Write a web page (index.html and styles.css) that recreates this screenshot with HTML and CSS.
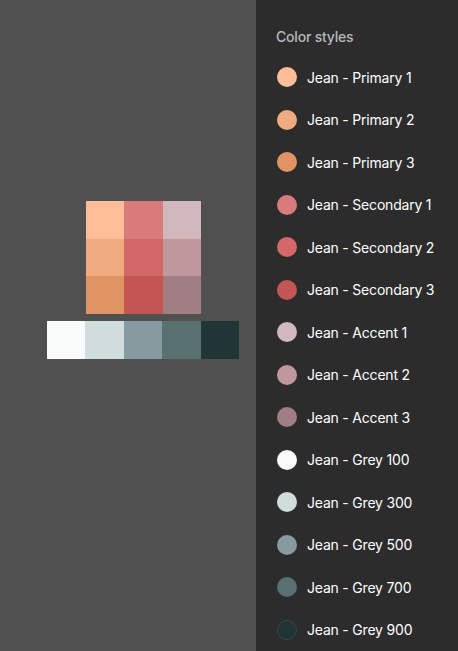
FILE: index.html
```html
<!DOCTYPE html>
<html>
<head>
  <title>Jean palette</title>
  <link rel="stylesheet" href="styles.css">
</head>
<body>
  <div class="app">
    <div class="canvas">
      <div class="palette">
        <div class="grid">
          <div class="cell c-primary-1"></div>
          <div class="cell c-secondary-1"></div>
          <div class="cell c-accent-1"></div>
          <div class="cell c-primary-2"></div>
          <div class="cell c-secondary-2"></div>
          <div class="cell c-accent-2"></div>
          <div class="cell c-primary-3"></div>
          <div class="cell c-secondary-3"></div>
          <div class="cell c-accent-3"></div>
        </div>
        <div class="greys">
          <div class="cell c-grey-100"></div>
          <div class="cell c-grey-300"></div>
          <div class="cell c-grey-500"></div>
          <div class="cell c-grey-700"></div>
          <div class="cell c-grey-900"></div>
        </div>
      </div>
    </div>

    <div class="sidebar">
      <h2 class="title">Color styles</h2>
      <ul class="styles">
        <li><span class="dot c-primary-1"></span>Jean - Primary 1</li>
        <li><span class="dot c-primary-2"></span>Jean - Primary 2</li>
        <li><span class="dot c-primary-3"></span>Jean - Primary 3</li>
        <li><span class="dot c-secondary-1"></span>Jean - Secondary 1</li>
        <li><span class="dot c-secondary-2"></span>Jean - Secondary 2</li>
        <li><span class="dot c-secondary-3"></span>Jean - Secondary 3</li>
        <li><span class="dot c-accent-1"></span>Jean - Accent 1</li>
        <li><span class="dot c-accent-2"></span>Jean - Accent 2</li>
        <li><span class="dot c-accent-3"></span>Jean - Accent 3</li>
        <li><span class="dot c-grey-100"></span>Jean - Grey 100</li>
        <li><span class="dot c-grey-300"></span>Jean - Grey 300</li>
        <li><span class="dot c-grey-500"></span>Jean - Grey 500</li>
        <li><span class="dot c-grey-700"></span>Jean - Grey 700</li>
        <li><span class="dot c-grey-900 outlined"></span>Jean - Grey 900</li>
      </ul>
    </div>
  </div>
</body>
</html>
```

FILE: styles.css
```css
body {
  margin: 0;
  padding: 0;
  font-family: Inter, "Liberation Sans", sans-serif;
  background: #505050;
}

.app {
  display: flex;
  height: 651px;
  overflow: hidden;
}

/* canvas side */
.canvas {
  width: 256px;
  flex-shrink: 0;
  background: #505050;
  padding-top: 201px;
  box-sizing: border-box;
}

.palette {
  display: flex;
  flex-direction: column;
  align-items: flex-start;
  padding-left: 47px;
}

.grid {
  display: grid;
  grid-template-columns: repeat(3, 38.4px);
  grid-template-rows: repeat(3, 37.7px);
  margin-left: 39px;
}

.greys {
  display: grid;
  grid-template-columns: repeat(5, 38.4px);
  grid-template-rows: 38px;
  margin-top: 7px;
}

/* color sidebar */
.sidebar {
  flex: 1;
  background: #2c2c2c;
  padding: 29px 0 0 20px;
}

.title {
  margin: 0 0 11px 0;
  font-size: 14px;
  line-height: 16px;
  font-weight: 500;
  letter-spacing: -0.2px;
  color: #b8b8bc;
}

.styles {
  list-style: none;
  margin: 0;
  padding: 0;
}

.styles li {
  display: flex;
  align-items: center;
  height: 42.5px;
  font-size: 14px;
  letter-spacing: -0.2px;
  color: #ffffff;
  white-space: nowrap;
}

.dot {
  width: 20px;
  height: 20px;
  border-radius: 50%;
  margin: 0 10px 0 1px;
  box-sizing: border-box;
}

.dot.outlined {
  border: 1px solid #35494a;
}

/* Jean palette */
.c-primary-1 { background: #fbbe97; }
.c-primary-2 { background: #efab80; }
.c-primary-3 { background: #e09464; }
.c-secondary-1 { background: #d77b7b; }
.c-secondary-2 { background: #d46868; }
.c-secondary-3 { background: #c45555; }
.c-accent-1 { background: #d1b8bd; }
.c-accent-2 { background: #bf989e; }
.c-accent-3 { background: #a17e84; }
.c-grey-100 { background: #f8fbfa; }
.c-grey-300 { background: #d1dcdc; }
.c-grey-500 { background: #879a9f; }
.c-grey-700 { background: #587070; }
.c-grey-900 { background: #213536; }
```
